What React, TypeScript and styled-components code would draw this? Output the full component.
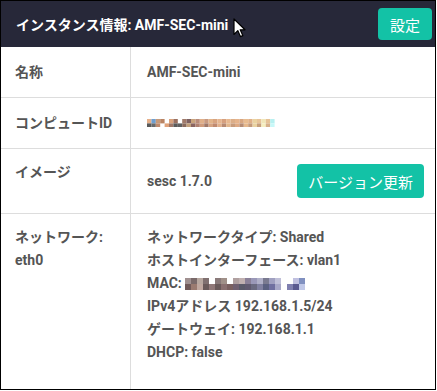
import styled, { createGlobalStyle } from "styled-components";

const GlobalStyle = createGlobalStyle`
  body {
    margin: 0;
    background: #fff;
    font-family: Roboto, "Noto Sans CJK JP", sans-serif;
  }
`;

const Panel = styled.div`
  width: 436px;
  height: 390px;
  box-sizing: border-box;
  border: 1px solid #000;
  display: flex;
  flex-direction: column;
  background: #fff;
`;

const Header = styled.div`
  height: 46px;
  flex-shrink: 0;
  background: #272839;
  display: flex;
  align-items: center;
  justify-content: space-between;
  padding: 0 3px 0 15px;
`;

const Title = styled.h1`
  margin: 0;
  color: #fff;
  font-size: 14px;
  font-weight: 700;
  display: flex;
  align-items: center;
`;

const Cursor = styled.svg`
  margin-left: 5px;
  margin-top: 8px;
`;

const Button = styled.button<{ $wide?: boolean }>`
  background: #13c2a6;
  color: #fff;
  border: none;
  border-radius: 4px;
  font-family: Roboto, "Noto Sans CJK JP", sans-serif;
  font-size: 15px;
  height: ${(p) => (p.$wide ? "34px" : "32px")};
  padding: 0 ${(p) => (p.$wide ? "11px" : "12px")};
  cursor: pointer;
`;

const Table = styled.div`
  flex: 1;
  display: grid;
  grid-template-columns: 130px 1fr;
  grid-template-rows: 51px 51px 65px 1fr;
  color: #555;
  font-size: 14px;
  font-weight: 700;
`;

const Label = styled.div<{ $top?: boolean; $last?: boolean }>`
  border-right: 1px solid #ddd;
  border-bottom: ${(p) => (p.$last ? "none" : "1px solid #ddd")};
  padding: ${(p) => (p.$top ? "12px 14px" : "0 14px")};
  display: flex;
  flex-direction: column;
  justify-content: ${(p) => (p.$top ? "flex-start" : "center")};
  line-height: 23px;
`;

const Value = styled.div<{ $last?: boolean }>`
  border-bottom: ${(p) => (p.$last ? "none" : "1px solid #ddd")};
  padding: 0 11px 0 16px;
  display: flex;
  align-items: center;
  justify-content: space-between;
  line-height: 23px;
`;

const Lines = styled.div`
  align-self: flex-start;
  padding-top: 12px;
  display: flex;
  flex-direction: column;
`;

const Line = styled.div`
  display: flex;
  align-items: center;
  white-space: nowrap;
`;

const Mosaic = ({
  colors,
  cell,
  cols,
}: {
  colors: string[];
  cell: number;
  cols: number;
}) => {
  const rows = Math.ceil(colors.length / cols);
  return (
    <svg width={cols * cell} height={rows * cell} style={{ display: "block" }}>
      {colors.map((c, i) =>
        c ? (
          <rect
            key={i}
            x={(i % cols) * cell}
            y={Math.floor(i / cols) * cell}
            width={cell}
            height={cell}
            fill={c}
          />
        ) : null
      )}
    </svg>
  );
};

const idTop = [
  "#e6b08a", "#6f9fd0", "#c79a7a", "#b98463", "", "#d9a27c", "#9a7060", "", "#a07a6a", "#7d6060",
  "#c9a37c", "#b98c7a", "#e0b08a", "#c99a80", "#e2b48a", "#d8a47f", "#e6b690", "#d6a07e", "#e8b890", "#dcae88",
  "#e6b48c", "#d8a680", "#e8bc90", "#e0b088", "#ead2a0", "#e8c498", "#f0e6b8", "#e6c296", "#b8f0f0", "",
];
const idBottom = [
  "#5a5a5a", "#6a6a6a", "#c08a6c", "", "#e0a27a", "#a07868", "#5a5a5a", "#606060", "#8a6a5c", "#c2a07a",
  "#8a6460", "#b08070", "#d09c7c", "#a07868", "#d6a482", "#c08a70", "#e2b08a", "#b88a72", "#e2b68c", "#c89c7c",
  "#deaa84", "#b68c74", "#e6b88c", "#c49a7a", "#ead2a0", "#c6a07c", "#f6eebe", "#d6b08a", "#c8f8f8", "",
];

const macTop = [
  "#a09090", "#7a6a6a", "#b8a8a0", "#807070", "", "#8a7a7a", "#a09088", "", "#b0a0a0", "#c0b0b0",
  "#8a8098", "#9a98b8", "#b0b0c8", "#7a7a90", "#a0a0c0", "#c0c0d8", "", "", "#c0c0e0", "#8090c0",
];
const macBottom = [
  "#705a5a", "#9a7a70", "#c0a8a0", "#6a5a5a", "#907878", "#6a5a5a", "#8a7070", "#7a6060", "#706070", "#5a5a6a",
  "#605a70", "#6a6a80", "#8080a0", "#5a6080", "#7070a0", "#a8a8c8", "", "#8080b0", "#5a5a90", "#c0c8e8",
];

export default function App() {
  return (
    <>
      <GlobalStyle />
      <Panel>
        <Header>
          <Title>
            インスタンス情報: AMF-SEC-mini
            <Cursor width="13" height="20" viewBox="0 0 13 20">
              <path
                d="M1 1 L1 16.5 L4.8 12.6 L7.4 18.6 L9.8 17.6 L7.2 11.8 L12 11.8 Z"
                fill="#fff"
                stroke="#000"
                strokeWidth="1.2"
                strokeLinejoin="round"
              />
            </Cursor>
          </Title>
          <Button>設定</Button>
        </Header>
        <Table>
          <Label>名称</Label>
          <Value>AMF-SEC-mini</Value>
          <Label>コンピュートID</Label>
          <Value>
            <Mosaic colors={[...idTop, ...idBottom]} cell={4.4} cols={30} />
          </Value>
          <Label $top>イメージ</Label>
          <Value>
            sesc 1.7.0
            <Button $wide>バージョン更新</Button>
          </Value>
          <Label $top $last>
            <span>ネットワーク:</span>
            <span>eth0</span>
          </Label>
          <Value $last>
            <Lines>
              <Line>ネットワークタイプ: Shared</Line>
              <Line>ホストインターフェース: vlan1</Line>
              <Line>
                MAC:&nbsp;
                <Mosaic colors={[...macTop, ...macBottom]} cell={6} cols={20} />
              </Line>
              <Line>IPv4アドレス 192.168.1.5/24</Line>
              <Line>ゲートウェイ: 192.168.1.1</Line>
              <Line>DHCP: false</Line>
            </Lines>
          </Value>
        </Table>
      </Panel>
    </>
  );
}
